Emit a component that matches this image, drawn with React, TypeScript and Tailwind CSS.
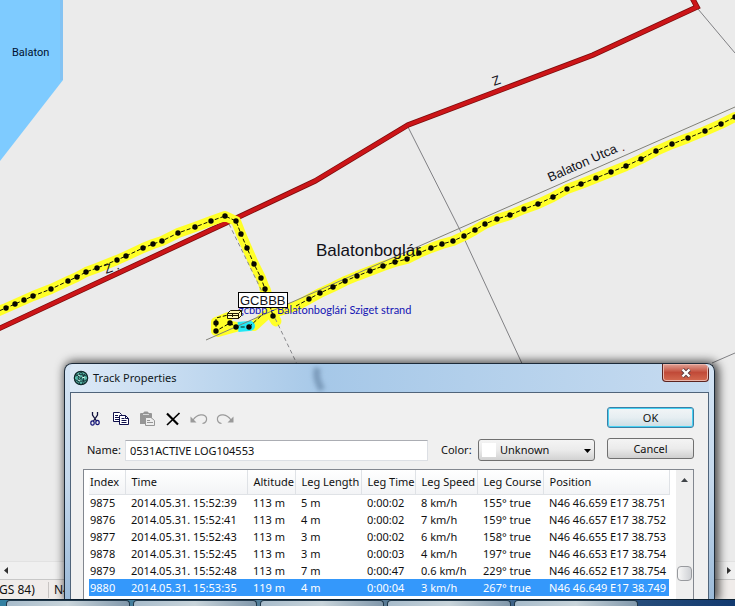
type Point = [number, number];

const roadTrack: Point[] = [
  [-6, 313], [6, 308], [15, 304], [24, 300], [33, 296], [51, 289], [68, 281], [77, 277], [86, 272],
  [97, 268], [117, 260], [126, 256], [143, 248], [153, 244], [162, 241], [178, 233], [195, 227],
  [211, 221], [225, 216], [236, 221], [241, 234], [247, 248], [254, 264], [261, 278], [265, 289],
  [273, 316],
];

const streetTrack: Point[] = [
  [296, 306], [309, 299], [320, 293], [333, 287], [345, 281], [357, 276], [370, 271], [383, 266],
  [395, 262], [407, 259], [419, 253], [431, 248], [442, 244], [453, 241], [464, 236], [475, 230],
  [485, 224], [497, 219], [510, 215], [524, 209], [538, 204], [553, 197], [567, 189], [581, 184],
  [596, 178], [611, 172], [626, 166], [641, 159], [656, 151], [672, 144], [688, 138], [705, 131],
  [721, 124], [735, 117],
];

const loopTrack: Point[] = [[216, 323], [216, 331], [230, 323], [236, 327], [249, 327]];

const rows = [
  ["9875", "2014.05.31. 15:52:39", "113 m", "5 m", "0:00:02", "8 km/h", "155° true", "N46 46.659 E17 38.751"],
  ["9876", "2014.05.31. 15:52:41", "113 m", "4 m", "0:00:02", "7 km/h", "159° true", "N46 46.657 E17 38.752"],
  ["9877", "2014.05.31. 15:52:43", "113 m", "3 m", "0:00:02", "6 km/h", "158° true", "N46 46.655 E17 38.753"],
  ["9878", "2014.05.31. 15:52:45", "113 m", "3 m", "0:00:03", "4 km/h", "197° true", "N46 46.653 E17 38.754"],
  ["9879", "2014.05.31. 15:52:48", "113 m", "7 m", "0:00:47", "0.6 km/h", "229° true", "N46 46.652 E17 38.754"],
  ["9880", "2014.05.31. 15:53:35", "119 m", "4 m", "0:00:04", "3 km/h", "267° true", "N46 46.649 E17 38.749"],
];

const columns = [
  { name: "Index", width: "w-[36px]" },
  { name: "Time", width: "w-[122px]" },
  { name: "Altitude", width: "w-[48px]" },
  { name: "Leg Length", width: "w-[66px]" },
  { name: "Leg Time", width: "w-[54px]" },
  { name: "Leg Speed", width: "w-[62px]" },
  { name: "Leg Course", width: "w-[66px]" },
  { name: "Position", width: "w-[126px]" },
];

const selected = "9880";

const toPoints = (pts: Point[]) => pts.map((p) => p.join(",")).join(" ");

function Dots({ points }: { points: Point[] }) {
  return (
    <>
      {points.map(([x, y]) => (
        <circle key={`${x}-${y}`} cx={x} cy={y} r="2.700" fill="#080800" />
      ))}
    </>
  );
}

function TrackMap() {
  const road = toPoints(roadTrack);
  const street = toPoints(streetTrack);
  const red = "-4,330 228,222 315,181 408,125 593,55 697,7 689,-8";
  return (
    <svg className="absolute inset-0 h-full w-full" aria-label="Map">
      <polygon points="0,0 63,0 63,80 0,161" fill="#7ecbff" />
      <rect x="60" width="3" height="80" fill="#84c3f3" />

      <g fill="none" stroke="#808084" strokeWidth="1">
        <path d="M408 127 L462 234 L525 370" />
        <path d="M698 9 L735 53" />
        <path d="M712 363 L735 353" />
      </g>
      <polyline points={red} fill="none" stroke="#7c0c0c" strokeWidth="5.400" />
      <polyline points={red} fill="none" stroke="#cc1518" strokeWidth="3.800" />

      <g fill="none" stroke="#ffff28" strokeLinecap="round" strokeLinejoin="round">
        <polyline points={road} strokeWidth="10" />
        <polyline points={street} strokeWidth="10" />
        <path d="M265 289 L273 316 L276 321" strokeWidth="11" />
        <path d="M216 331 L216 322 L228 317 M216 323 L236 327 L218 332" strokeWidth="10" />
        <path d="M254 326 L266 315 L296 306" strokeWidth="10" />
      </g>
      <path d="M238 327 L249 326" fill="none" stroke="#22e8f4" strokeWidth="10" />
      <path d="M249 326 h1" stroke="#22e8f4" strokeWidth="10" strokeLinecap="round" />

      <path d="M206 340 L735 107" fill="none" stroke="#808078" strokeWidth="1" />
      <path d="M229 224 L274 316 L297 364" fill="none" stroke="#88888c" strokeWidth="1" strokeDasharray="4 3" />
      <g fill="none" stroke="#101000" strokeWidth="1" strokeDasharray="4 2">
        <polyline points={road} />
        <polyline points={street} />
        <polyline points={toPoints(loopTrack)} />
        <path d="M216 323 L216 318 L228 315 M249 327 L263 314" />
      </g>
      <Dots points={roadTrack} />
      <Dots points={streetTrack.slice(1)} />
      <Dots points={loopTrack} />

      <g fontFamily="'Liberation Sans', Arial, sans-serif" fill="#101018">
        <text x="12" y="56" fontSize="11" fill="#001030" fontFamily="Roboto, sans-serif">Balaton</text>
        <text x="316" y="256" fontSize="17">Balatonboglár</text>
        <text fontSize="13" transform="translate(550 182) rotate(-24)">Balaton Utca</text>
        <text x="622" y="151" fontSize="12" fill="#602020">.</text>
        <text fontSize="13" transform="translate(494 86) rotate(-20)">Z</text>
        <text fontSize="13" transform="translate(106 274) rotate(-20)">Z .</text>
        <text x="238" y="314" fontSize="11" fill="#1414b4" fontFamily="Lato, sans-serif">gcbbb - Balatonboglári Sziget strand</text>
        <rect x="238.500" y="292.500" width="49" height="15" fill="#fff" stroke="#000" />
        <text x="240" y="305" fontSize="13">GCBBB</text>
      </g>

      <g fill="#fffbb0" stroke="#201c00" strokeLinejoin="round">
        <path d="M227.500 313.500 L230.500 310.500 H241.500 L238.500 313.500 Z" />
        <path d="M227.500 313.500 H238.500 V318.500 H227.500 Z" />
        <path d="M238.500 313.500 L241.500 310.500 V315.500 L238.500 318.500 Z" />
        <path d="M227.500 315.500 H238.500 M232.500 313.500 V317" />
      </g>
    </svg>
  );
}

function GlobeIcon() {
  return (
    <svg width="16" height="16" viewBox="0 0 16 16" aria-hidden="true">
      <circle cx="8" cy="8" r="6.700" fill="#58b8a8" stroke="#102828" strokeWidth="1.200" />
      <path
        d="M2 6 Q8 3 14 6 M1.500 9.500 Q8 13 14.500 9.500 M8 1.500 Q3 7 7 14.500 M8 1.500 Q13 8 9 14.500 M3 3.500 L12.500 13 M12.500 3.500 L4 12.500"
        fill="none"
        stroke="#163a3c"
        strokeWidth="1"
      />
      <path d="M5 5 l2 1 M9 7 l3 1 M5 10 l2 1" stroke="#d8fff4" strokeWidth="1" />
    </svg>
  );
}

function CutIcon() {
  return (
    <svg width="16" height="16" viewBox="0 0 16 16" fill="none" stroke="#10103c" aria-hidden="true">
      <path d="M5.500 1 V4 L9.500 10 M10.500 1 V4 L6.500 10" strokeWidth="1.300" />
      <ellipse cx="5.500" cy="12" rx="1.700" ry="2.200" stroke="#141478" strokeWidth="1.200" />
      <ellipse cx="10.500" cy="11.500" rx="1.700" ry="2.200" stroke="#141478" strokeWidth="1.200" />
    </svg>
  );
}

function CopyIcon() {
  return (
    <svg width="16" height="16" viewBox="0 0 16 16" fill="#fff" stroke="#10104c" aria-hidden="true">
      <path d="M0.500 1.500 H6.500 L8.500 3.500 V10.500 H0.500 Z" />
      <path d="M2 4.500 h3 M2 6.500 h4 M2 8.500 h4" />
      <path d="M6.500 4.500 H12.500 L15.500 7.500 V13.500 H6.500 Z" />
      <path d="M12.500 4.500 V7.500 H15.500 M8.500 7.500 h3 M8.500 9.500 h5 M8.500 11.500 h5" fill="none" />
    </svg>
  );
}

function PasteIcon() {
  return (
    <svg width="16" height="16" viewBox="0 0 16 16" aria-hidden="true">
      <path d="M1 3 Q1 2 2 2 H4 L5.500 0.500 H8.500 L10 2 H12 Q13 2 13 3 V13 H1 Z" fill="#969696" />
      <path d="M4 3.500 H10" stroke="#d8d8d8" />
      <path d="M6.500 6.500 H12 L15.500 9.500 V14.500 H6.500 Z" fill="#eee" stroke="#969696" />
      <path d="M8 9.500 h3 M8 11.500 h6" stroke="#969696" />
    </svg>
  );
}

function DeleteIcon() {
  return (
    <svg width="16" height="16" viewBox="0 0 16 16" fill="none" stroke="#000" aria-hidden="true">
      <path d="M2 2.500 L13 13.500" strokeWidth="2.200" />
      <path d="M14.500 2 L2 14" strokeWidth="1.700" />
    </svg>
  );
}

function UndoIcon() {
  return (
    <svg width="16" height="16" viewBox="1 0 16 16" overflow="visible" aria-hidden="true">
      <path d="M3 9 C7 3 15 2 16.500 7 C17 10 15 12 12.500 12.500" fill="none" stroke="#9a9a9a" strokeWidth="1.200" />
      <path d="M0.500 5.500 V11.500 H6.500 Z" fill="#9a9a9a" />
    </svg>
  );
}

function RedoIcon() {
  return (
    <svg width="16" height="16" viewBox="1 0 16 16" overflow="visible" aria-hidden="true">
      <path d="M15 9 C11 3 3 2 1.500 7 C1 10 3 12 5.500 12.500" fill="none" stroke="#9a9a9a" strokeWidth="1.200" />
      <path d="M17.500 5.500 V11.500 H11.500 Z" fill="#9a9a9a" />
    </svg>
  );
}

const tools = [
  { label: "Cut", icon: <CutIcon /> },
  { label: "Copy", icon: <CopyIcon /> },
  { label: "Paste", icon: <PasteIcon /> },
  { label: "Delete", icon: <DeleteIcon /> },
  { label: "Undo", icon: <UndoIcon /> },
  { label: "Redo", icon: <RedoIcon /> },
];

function TitleBar() {
  return (
    <header className="relative flex h-7 items-start justify-between overflow-hidden rounded-t-md bg-linear-to-r from-[#dce9f6] via-[#a6c8e8] via-40% to-[#c6dbf0] pl-[3px]">
      <div className="flex h-7 items-center gap-1">
        <GlobeIcon />
        <h1 className="text-[11px] text-[#101820]">Track Properties</h1>
      </div>
      <svg className="absolute left-[236px] top-0 blur-[2px]" width="40" height="28" aria-hidden="true">
        <path d="M12 4 Q8 12 16 26" fill="none" stroke="#7c9cbc" strokeWidth="7" />
      </svg>
      <button
        aria-label="Close"
        className="flex h-[18px] w-[47px] items-center justify-center rounded-b border border-t-0 border-[#5c2420] bg-linear-to-b from-[#dfa196] via-[#c14a38] via-50% to-[#d46a50] shadow-[inset_0_0_0_1px_#eab5aa]"
      >
        <svg width="12" height="10" viewBox="0 0 12 10" aria-hidden="true">
          <path d="M2.500 1.500 L9.500 8.500 M9.500 1.500 L2.500 8.500" stroke="#5a3a40" strokeWidth="4" />
          <path d="M2.500 1.500 L9.500 8.500 M9.500 1.500 L2.500 8.500" stroke="#fff" strokeWidth="2.400" />
        </svg>
      </button>
    </header>
  );
}

function TrackTable() {
  return (
    <div className="flex min-h-0 flex-1 border border-b-0 border-[#82878f] bg-white">
      <div className="min-w-0 flex-1 overflow-hidden pl-[5px]">
        <table className="table-fixed border-collapse whitespace-nowrap">
          <thead>
            <tr className="h-6 bg-linear-to-b from-white to-[#f3f4f6]">
              {columns.map((c, i) => (
                <th
                  key={c.name}
                  className={`${c.width} border-b border-r border-[#dfe2e6] p-0 text-left font-normal ${i === 0 ? "pl-px" : "pl-[6px]"}`}
                >
                  {c.name}
                </th>
              ))}
            </tr>
          </thead>
          <tbody>
            {rows.map((row) => (
              <tr key={row[0]} className={row[0] === selected ? "h-[17px] bg-[#3498fb] text-white" : "h-[17px]"}>
                {row.map((cell, i) => (
                  <td key={columns[i].name} className={i === 0 ? "p-0 pl-px" : "p-0 pl-[6px]"}>
                    {cell}
                  </td>
                ))}
              </tr>
            ))}
          </tbody>
        </table>
      </div>
      <div className="flex w-[17px] flex-col items-center justify-between bg-[#efefef] pb-[18px] pt-2">
        <svg width="7" height="4" viewBox="0 0 7 4" aria-hidden="true">
          <path d="M0 4 L3.500 0 L7 4 Z" fill="#404448" />
        </svg>
        <div className="h-[15px] w-[15px] rounded-sm border border-[#989a9e] bg-linear-to-r from-[#f8f8f8] to-[#cfd1d5]" />
      </div>
    </div>
  );
}

function TrackDialog() {
  return (
    <section className="absolute bottom-0 left-16 right-5 top-[363px] flex flex-col rounded-t-lg border border-b-0 border-[#1c2a38] bg-linear-to-b from-[#d4e4f4] via-[#c4d8ec] to-[#9bbad8] px-[5px] shadow-[2px_0_10px_2px_#000000b0]">
      <TitleBar />
      <div className="flex min-h-0 flex-1 flex-col border border-b-0 border-[#50647a] bg-[#f0f0f0] pl-3 pr-[14px] pt-[14px]">
        <div className="flex gap-3 pb-2">
          <div className="min-w-0 flex-1">
            <div className="flex h-6 items-center gap-[10px] pl-1">
              {tools.map((t) => (
                <button key={t.label} aria-label={t.label} title={t.label}>
                  {t.icon}
                </button>
              ))}
            </div>
            <div className="flex items-center pt-2 pl-1">
              <label htmlFor="track-name" className="w-[38px]">Name:</label>
              <input
                id="track-name"
                defaultValue="0531ACTIVE LOG104553"
                className="h-[21px] min-w-0 flex-1 border border-[#dcdfe4] border-t-[#abadb3] bg-white px-1"
              />
              <label htmlFor="track-color" className="w-[50px] pl-[13px]">Color:</label>
              <div className="relative">
                <select
                  id="track-color"
                  className="h-[22px] w-[117px] appearance-none rounded-[3px] border border-[#707070] bg-linear-to-b from-[#f4f4f4] via-[#ebebeb] to-[#d2d2d2] pl-[21px]"
                >
                  <option>Unknown</option>
                </select>
                <span className="absolute left-1 top-1 size-[14px] bg-white" />
                <svg className="absolute right-1 top-[10px]" width="7" height="4" viewBox="0 0 7 4" aria-hidden="true">
                  <path d="M0 0 H7 L3.500 4 Z" />
                </svg>
              </div>
            </div>
          </div>
          <div className="flex w-[87px] flex-col gap-[10px]">
            <button className="h-[21px] rounded-[3px] border border-[#3c7fa5] bg-linear-to-b from-[#f2f5f7] via-[#e6eef2] to-[#cbdde4] shadow-[inset_0_0_0_1px_#48d2f4]">
              OK
            </button>
            <button className="h-[21px] rounded-[3px] border border-[#707070] bg-linear-to-b from-[#f4f4f4] via-[#ebebeb] to-[#cfcfcf]">
              Cancel
            </button>
          </div>
        </div>
        <TrackTable />
      </div>
    </section>
  );
}

function Taskbar() {
  return (
    <footer className="relative flex h-[7px] gap-[3px] border-t border-[#0c2030] bg-linear-to-r from-[#327fa0] via-[#5b7d96] to-[#123a70] pl-[6px]">
      {["a", "b", "c", "d", "e"].map((k) => (
        <div
          key={k}
          className="w-[124px] rounded-t-sm border border-b-0 border-[#20384a] bg-linear-to-r from-[#a8bccb] via-[#c8d4da] to-[#8198ab]"
        />
      ))}
    </footer>
  );
}

export default function App() {
  return (
    <div className="flex h-screen flex-col overflow-hidden bg-[#ebebeb] font-['Noto_Sans','Open_Sans',sans-serif] text-[11px] leading-4 text-[#101010]">
      <main className="relative flex min-h-0 flex-1 flex-col overflow-hidden">
        <div className="relative flex-1">
          <TrackMap />
        </div>
        <div className="relative flex h-[18px] items-center justify-between border-t border-[#e2e2e2] bg-[#f0f0f0] px-1">
          <svg width="4" height="7" viewBox="0 0 4 7" aria-hidden="true">
            <path d="M4 0 V7 L0 3.500 Z" fill="#303030" />
          </svg>
          <svg width="4" height="7" viewBox="0 0 4 7" aria-hidden="true">
            <path d="M0 0 V7 L4 3.500 Z" fill="#303030" />
          </svg>
        </div>
        <div className="relative flex h-5 items-center border-t border-[#c8c8c8] bg-[#f0ecea] text-xs">
          <span className="-ml-3 w-[61px] border-r border-[#c8c4c2]">WGS 84)</span>
          <span className="pl-[5px]">N46</span>
        </div>
        <TrackDialog />
      </main>
      <Taskbar />
    </div>
  );
}
